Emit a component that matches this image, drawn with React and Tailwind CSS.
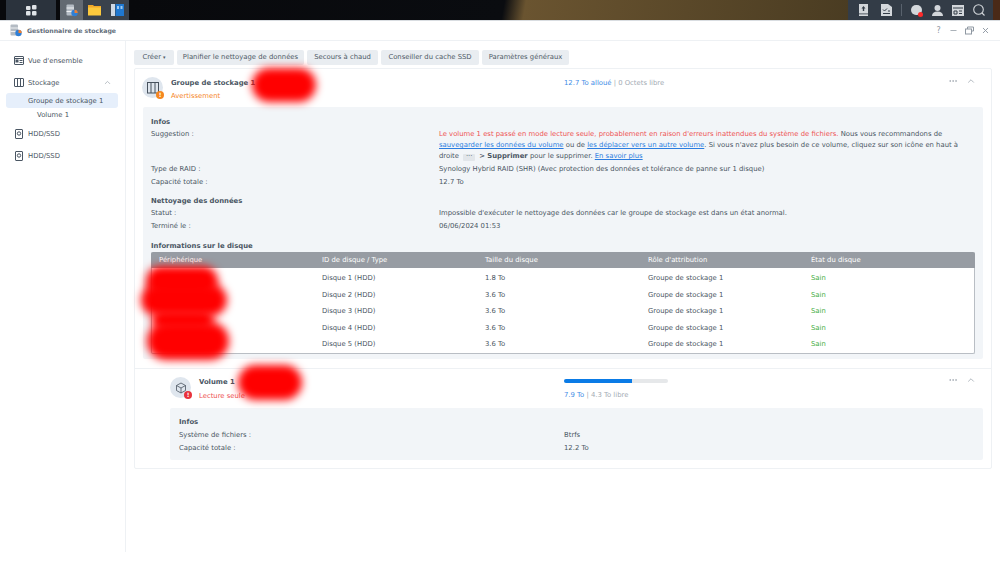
import React from "react";
import { ChevronUp, Ellipsis, Minus, X } from "lucide-react";

const font = { fontFamily: "'DejaVu Sans', Verdana, sans-serif" };

function Blob({ className }) {
  return <div className={"absolute bg-[#ff0000] rounded-full blur-[4px] " + className} />;
}

function Nav({ icon, label, active, indent, chevron, flat }) {
  return (
    <div className={"flex items-center h-[15px] rounded-[3px] text-[6.85px] text-[#4a5663] " + (active ? "bg-[#e6effb]" : "")}>
      {icon}
      <span className={(flat ? "" : "mt-[2px] ") + (indent || "")}>{label}</span>
      {chevron && <ChevronUp size={9} className="ml-auto mr-[6px] text-[#a3abb3]" />}
    </div>
  );
}

function TileIcon({ color, inner }) {
  return (
    <div className="relative w-[21px] h-[21px] rounded-full bg-[#dfe6ee] flex items-center justify-center shrink-0">
      {inner}
      <div className={"absolute -right-[1px] -bottom-[1px] w-[8px] h-[8px] rounded-full text-white text-[6px] leading-[8px] font-bold text-center " + color}>!</div>
    </div>
  );
}

function Row({ label, children }) {
  return (
    <div className="flex text-[6.85px] leading-[12.5px] text-[#4a5663]">
      <div className="w-[288px] shrink-0">{label}</div>
      <div className="flex-1">{children}</div>
    </div>
  );
}

const A = ({ children }) => <span className="text-[#2b7de0] underline">{children}</span>;

const disks = [1, 2, 3, 4, 5];
const sizes = ["1.8 To", "3.6 To", "3.6 To", "3.6 To", "3.6 To"];

function AppLogo() {
  return (
    <svg width="12" height="13" viewBox="0 0 12 13">
      <rect x="0.5" y="0.5" width="7.5" height="11" rx="1" fill="#b4bbc3" />
      <path d="M0.5 4h7.5M0.5 7.5h7.5" stroke="#fff" strokeWidth="0.8" />
      <circle cx="8.5" cy="9" r="3.2" fill="#2f7fd6" />
      <path d="M8.5 5.8a3.2 3.2 0 0 1 3.2 3.2h-3.2z" fill="#f08030" />
    </svg>
  );
}

export default function App() {
  return (
    <div style={font} className="relative w-[1000px] h-[577px] overflow-hidden bg-white text-[#4a5663]">
      {/* Top bar */}
      <div className="h-[20px] flex bg-[#08090c]">
        <div className="w-[6px]" />
        <div className="w-[50px] bg-[#2b333d] flex items-center justify-center">
          <svg width="11" height="11" viewBox="0 0 11 11" fill="#dfe3e7"><rect x="0" y="1" width="4.5" height="4" rx="1" /><rect x="6" y="0" width="4.5" height="4.5" rx="1" /><rect x="0" y="6" width="4.5" height="4.5" rx="1" /><rect x="6" y="6" width="4.5" height="4.5" rx="1" /></svg>
        </div>
        <div className="w-[4px]" />
        <div className="w-[69px] bg-[#3a424c] flex">
          <div className="w-[23px] bg-[#636a72] flex items-center justify-center">
            <AppLogo />
          </div>
          <div className="w-[23px] flex items-center justify-center">
            <svg width="13" height="12" viewBox="0 0 13 12"><path d="M0 1h5l1 1h7v9H0z" fill="#f0a92a" /><rect y="3.5" width="13" height="8" fill="#fbc93d" /></svg>
          </div>
          <div className="w-[23px] flex items-center justify-center">
            <svg width="13" height="12" viewBox="0 0 13 12"><rect width="4" height="12" fill="#cfd8e3" /><rect x="4.5" width="8.5" height="12" fill="#1f78d1" /><rect x="6" y="2" width="2" height="3" fill="#9cc9f2" /><rect x="9.5" y="2" width="2" height="3" fill="#9cc9f2" /></svg>
          </div>
        </div>
        <div className="flex-1 bg-[linear-gradient(100deg,#08090c_0%,#0a0c10_52%,#6a5430_55%,#4a3c22_100%)]" />
        <div className="w-[145px] bg-[#333c47] flex items-center pl-[10px] text-[#d3d7db]">
          <svg width="11" height="12" viewBox="0 0 11 12" fill="#d3d7db"><path d="M1 0h9v9.5H1z" /><path d="M1 10.3h9V12H1z" /><path d="M5.5 2l2 2.5H3.5zM4.8 4.5h1.4V7H4.8z" fill="#333c47" /></svg>
          <svg className="ml-[12px]" width="11" height="12" viewBox="0 0 11 12" fill="#d3d7db"><path d="M0 0h7l4 3v9H0z" /><path d="M2 5.5l1.5 1.5L6 4.5M2 9.5h7M7 7h2" stroke="#333c47" strokeWidth="1" fill="none" /></svg>
          <div className="w-px h-[12px] bg-[#59626d] ml-[9px]" />
          <div className="relative ml-[9px] w-[11px] h-[10px] rounded-full bg-[#d3d7db]">
            <div className="absolute right-[-1px] bottom-[-2px] w-[5px] h-[5px] rounded-full bg-[#ff2b2b]" />
          </div>
          <svg className="ml-[10px]" width="11" height="11" viewBox="0 0 11 11" fill="#d3d7db"><circle cx="5.5" cy="3" r="3" /><path d="M0 11c0-3 2-4.5 5.5-4.5S11 8 11 11z" /></svg>
          <svg className="ml-[9px]" width="12" height="11" viewBox="0 0 12 11" fill="#d3d7db"><path d="M0 0h12v11H0z" /><path d="M1 3h10M2 6h3v3H2zM7 6h3M7 8.5h3" stroke="#333c47" fill="none" /></svg>
          <svg className="ml-[9px]" width="12" height="12" viewBox="0 0 12 12" fill="none" stroke="#d3d7db" strokeWidth="1.1"><circle cx="5.5" cy="5.5" r="4.8" /><path d="M9 9l2.5 2.5" /></svg>
        </div>
        <div className="w-[7px] bg-[#4a2a18]" />
      </div>

      {/* Title bar */}
      <div className="h-[21px] flex items-center border-b border-[#eef1f4] border-t border-t-[#d9dde1]">
        <div className="ml-[10px] flex"><AppLogo /></div>
        <span className="ml-[5px] text-[6.2px] font-bold text-[#626d79]">Gestionnaire de stockage</span>
        <div className="ml-auto flex items-center gap-[7px] pr-[10px] text-[#8f98a2]">
          <span className="text-[8px] w-[9px] text-center -mr-[1px] -ml-[1px]">?</span>
          <Minus size={9} />
          <svg width="9" height="9" viewBox="0 0 9 9" fill="none" stroke="currentColor"><rect x="0.5" y="3" width="6" height="5" /><path d="M2.5 3V1h6v4H7" /></svg>
          <X size={9} strokeWidth={2.5} />
        </div>
      </div>

      <div className="flex h-[511px]">
        {/* Sidebar */}
        <div className="w-[126px] shrink-0 border-r border-[#eef1f4] pl-[6px] pr-[7px] pt-[12px] flex flex-col">
          <Nav label="Vue d'ensemble" icon={<svg className="ml-[8px] mr-[4px]" width="10" height="9" viewBox="0 0 10 9" fill="none" stroke="#4a5663"><rect x="0.5" y="0.5" width="9" height="8" rx="0.5" /><path d="M1 2.5h8" /><rect x="2" y="4" width="2" height="2" fill="#4a5663" /><path d="M5.5 4.5h3M5.5 6.5h3" /></svg>} />
          <div className="h-[7px]" />
          <Nav label="Stockage" chevron icon={<svg className="ml-[8px] mr-[4px]" width="10" height="9" viewBox="0 0 10 9" fill="none" stroke="#4a5663"><rect x="0.5" y="0.5" width="9" height="8" rx="0.5" /><path d="M3.5 1v7M6.5 1v7" /></svg>} />
          <div className="h-[3px]" />
          <Nav label="Groupe de stockage 1" active indent="pl-[22px]" />
          <Nav label="Volume 1" flat indent="pl-[31px]" />
          <div className="h-[3px]" />
          <Nav label="HDD/SSD" icon={<svg className="ml-[9px] mr-[5px]" width="8" height="10" viewBox="0 0 8 10" fill="none" stroke="#4a5663"><rect x="0.5" y="0.5" width="7" height="9" rx="0.5" /><circle cx="4" cy="4.5" r="1.7" /></svg>} />
          <div className="h-[7px]" />
          <Nav label="HDD/SSD" icon={<svg className="ml-[9px] mr-[5px]" width="8" height="10" viewBox="0 0 8 10" fill="none" stroke="#4a5663"><rect x="0.5" y="0.5" width="7" height="9" rx="0.5" /><circle cx="4" cy="4.5" r="1.7" /></svg>} />
        </div>

        {/* Main */}
        <div className="flex-1 pl-[8px] pr-[8px] pt-[9px]">
          <div className="flex gap-[3px] text-[6.85px] text-[#4f5b67] h-[15px]">
            <div className="w-[40px] bg-[#e9edf1] rounded-[2px] flex items-center justify-center gap-[2px]">Créer <span className="text-[5px]">▾</span></div>
            {[["Planifier le nettoyage de données", "w-[127px]"], ["Secours à chaud", "w-[71px]"], ["Conseiller du cache SSD", "w-[98px]"], ["Paramètres généraux", "w-[87px]"]].map(([t, w]) => (
              <div key={t} className={"bg-[#e9edf1] rounded-[2px] flex items-center justify-center whitespace-nowrap " + w}>{t}</div>
            ))}
          </div>

          <div className="mt-[3px] border border-[#eef1f4] rounded-[2px] h-[401px]">
            {/* Group header */}
            <div className="h-[38px] flex pl-[7px] pr-[15px] pt-[8px]">
              <TileIcon color="bg-[#f5871f]" inner={<svg width="12" height="12" viewBox="0 0 12 12" fill="none" stroke="#47525e"><rect x="0.5" y="0.5" width="11" height="10.5" /><path d="M4 1v10M8 1v10" /></svg>} />
              <div className="ml-[8px] w-[393px]">
                <div className="text-[6.85px] font-bold text-[#4a5663] leading-[13px]">Groupe de stockage 1</div>
                <div className="text-[6.85px] text-[#f5872a] leading-[13px]">Avertissement</div>
              </div>
              <div className="text-[6.85px] leading-[13px] flex-1 text-[#a3abb3]"><span className="text-[#3f8de6]">12.7 To alloué</span> | 0 Octets libre</div>
              <Ellipsis size={10} className="text-[#a3abb3] -mt-[1px]" />
              <ChevronUp size={10} className="ml-[8px] text-[#a3abb3] -mt-[1px]" />
            </div>

            {/* Group panel */}
            <div className="mx-[8px] bg-[#f2f5f8] rounded-[2px] h-[252px] pl-[8px] pr-[8px] pt-[9px]">
              <div className="text-[6.85px] font-bold leading-[12px]">Infos</div>
              <Row label="Suggestion :">
                <div className="leading-[11px] pt-[1px] pb-[1px] w-[525px] -mr-[20px]">
                  <div className="whitespace-nowrap"><span className="text-[#ee5454]">Le volume 1 est passé en mode lecture seule, probablement en raison d'erreurs inattendues du système de fichiers.</span> Nous vous recommandons de</div>
                  <div className="whitespace-nowrap"><A>sauvegarder les données du volume</A> ou de <A>les déplacer vers un autre volume</A>. Si vous n'avez plus besoin de ce volume, cliquez sur son icône en haut à</div>
                  <div className="whitespace-nowrap">droite <span className="inline-block bg-[#e2e6ea] rounded-[1px] w-[12px] h-[7px] leading-[5px] text-center mx-[2px]">···</span> &gt; <b>Supprimer</b> pour le supprimer. <A>En savoir plus</A></div>
                </div>
              </Row>
              <Row label="Type de RAID :">Synology Hybrid RAID (SHR) (Avec protection des données et tolérance de panne sur 1 disque)</Row>
              <Row label="Capacité totale :">12.7 To</Row>
              <div className="text-[6.85px] font-bold leading-[12px] mt-[7px]">Nettoyage des données</div>
              <Row label="Statut :">Impossible d'exécuter le nettoyage des données car le groupe de stockage est dans un état anormal.</Row>
              <Row label="Terminé le :">06/06/2024 01:53</Row>
              <div className="text-[6.85px] font-bold leading-[12px] mt-[8px]">Informations sur le disque</div>

              <div className="border-x border-b border-[#b9bec4] rounded-[2px] bg-white">
                <div className="h-[16px] bg-[#979ca3] -mx-px flex items-center text-[6.85px] text-white rounded-t-[2px] mb-[2px]">
                  <div className="w-[171px] pl-[8px]">Périphérique</div>
                  <div className="w-[163px]">ID de disque / Type</div>
                  <div className="w-[163px]">Taille du disque</div>
                  <div className="w-[163px]">Rôle d'attribution</div>
                  <div>État du disque</div>
                </div>
                {disks.map((d, i) => (
                  <div key={d} className="h-[16.5px] -mx-px flex items-center text-[6.85px]">
                    <div className="w-[171px]" />
                    <div className="w-[163px]">Disque {d} (HDD)</div>
                    <div className="w-[163px]">{sizes[i]}</div>
                    <div className="w-[163px]">Groupe de stockage 1</div>
                    <div className="text-[#3fae3f]">Sain</div>
                  </div>
                ))}
              </div>
            </div>

            <div className="h-[10px] border-b border-[#eef1f4]" />

            {/* Volume header */}
            <div className="h-[39px] flex pl-[35px] pr-[15px] pt-[8px]">
              <TileIcon color="bg-[#e8323c]" inner={<svg width="12" height="12" viewBox="0 0 24 24" fill="none" stroke="#47525e" strokeWidth="1.6"><path d="M12 2l9 5v10l-9 5-9-5V7z" /><path d="M3 7l9 5 9-5M12 12v10" /></svg>} />
              <div className="ml-[8px] w-[365px] -mt-[1px]">
                <div className="text-[6.85px] font-bold leading-[13px]">Volume 1</div>
                <div className="text-[6.85px] text-[#ee5454] leading-[13px] mt-[1px]">Lecture seule</div>
              </div>
              <div className="w-[104px]">
                <div className="h-[4px] rounded-full bg-[#e6e8ea] overflow-hidden mt-[2px]"><div className="h-full w-[65%] bg-[#0a7be6]" /></div>
                <div className="text-[6.85px] leading-[13px] mt-[6px] text-[#a3abb3] whitespace-nowrap"><span className="text-[#3f8de6]">7.9 To</span> | 4.3 To libre</div>
              </div>
              <div className="flex-1" />
              <Ellipsis size={10} className="text-[#a3abb3] -mt-[2px]" />
              <ChevronUp size={10} className="ml-[8px] text-[#a3abb3] -mt-[2px]" />
            </div>

            {/* Volume panel */}
            <div className="ml-[35px] mr-[8px] bg-[#f2f5f8] rounded-[2px] h-[52px] pl-[9px] pt-[8px]">
              <div className="text-[6.85px] font-bold leading-[13px]">Infos</div>
              <div className="flex text-[6.85px] leading-[13px]"><div className="w-[385px]">Système de fichiers :</div><div>Btrfs</div></div>
              <div className="flex text-[6.85px] leading-[13px]"><div className="w-[385px]">Capacité totale :</div><div>12.2 To</div></div>
            </div>
          </div>
        </div>
      </div>

      {/* Redaction blobs */}
      <Blob className="left-[252px] top-[68px] w-[64px] h-[34px]" />
      <Blob className="left-[146px] top-[266px] w-[72px] h-[30px]" />
      <Blob className="left-[141px] top-[284px] w-[86px] h-[32px]" />
      <Blob className="left-[152px] top-[310px] w-[62px] h-[20px]" />
      <Blob className="left-[147px] top-[322px] w-[82px] h-[38px]" />
      <Blob className="left-[238px] top-[365px] w-[64px] h-[35px]" />
    </div>
  );
}
